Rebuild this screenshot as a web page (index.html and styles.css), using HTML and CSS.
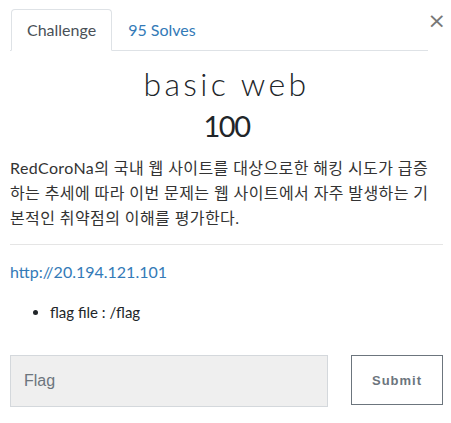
FILE: index.html
```html
<!DOCTYPE html>
<html lang="ko">
<head>
<meta charset="utf-8">
<link rel="stylesheet" href="styles.css">
</head>
<body>
<div class="modal">
  <div class="tabs">
    <ul class="nav">
      <li class="tab active">Challenge</li>
      <li class="tab"><a href="#">95 Solves</a></li>
    </ul>
    <span class="close">&times;</span>
  </div>
  <div class="body">
    <h2 class="title">basic web</h2>
    <h3 class="value">100</h3>
    <p class="desc">RedCoroNa의 국내 웹 사이트를 대상으로한 해킹 시도가 급증하는 추세에 따라 이번 문제는 웹 사이트에서 자주 발생하는 기본적인 취약점의 이해를 평가한다.</p>
    <hr class="rule">
    <p class="link"><a href="#">http://20.194.121.101</a></p>
    <ul class="list"><li>flag file : /flag</li></ul>
    <form class="submit-row">
      <input class="flag" type="text" placeholder="Flag">
      <button class="btn" type="button">Submit</button>
    </form>
  </div>
</div>
</body>
</html>
```

FILE: styles.css
```css
* { box-sizing: border-box; }
html, body { margin: 0; padding: 0; background: #fff; }
body {
  font-family: Lato, "Noto Sans CJK KR", sans-serif;
  color: #212529;
  font-size: 16px;
}
.modal { padding: 9px 8px 0 10px; }
.tabs { display: flex; align-items: flex-start; }
.nav {
  list-style: none; margin: 0; padding: 0 0 0 1px;
  display: flex; width: 420px;
  border-bottom: 1px solid #dee2e6;
}
.tab {
  padding: 10px 15px 10px;
  line-height: 20px;
  font-size: 16px;
  border: 1px solid transparent;
  border-radius: 4px 4px 0 0;
  margin-bottom: -1px;
}
.tab.active {
  color: #495057;
  border-color: #dee2e6 #dee2e6 #fff;
  background: #fff;
}
.tab a { color: #337ab7; text-decoration: none; }
.close {
  margin-left: auto;
  margin-right: -3px;
  font-size: 22px;
  line-height: 1;
  color: #777;
  margin-top: 1px;
  font-family: "DejaVu Sans", sans-serif;
}
.title {
  text-align: center;
  font-weight: 300;
  font-size: 32px;
  letter-spacing: 3.4px;
  margin: 13px 0 0;
  line-height: 40px;
  color: #212529;
}
.value {
  text-align: center;
  font-weight: 400;
  font-size: 29px;
  letter-spacing: -1.5px;
  line-height: 36px;
  margin: 4px 0 11px;
}
.desc {
  margin: 0;
  line-height: 25px;
  color: #333;
  letter-spacing: 0.4px;
}
.rule {
  border: 0;
  border-top: 1px solid #e5e5e5;
  margin: 14px 0 15px;
}
.link { margin: 0; line-height: 24px; }
.link a { color: #337ab7; text-decoration: none; }
.list { margin: 16px 0 0; padding-left: 40px; line-height: 24px; font-size: 15px; }
.submit-row {
  display: flex;
  justify-content: space-between;
  margin-top: 31px;
}
.flag {
  width: 318px; height: 52px;
  background: #efefef;
  border: 1px solid #d4d8dc;
  padding: 0 13px;
  font-family: "Liberation Sans", Arial, sans-serif;
  font-size: 16px;
  color: #495057;
}
.flag::placeholder { color: #6c757d; }
.btn {
  width: 92px; height: 50px;
  background: #fff;
  border: 1px solid #6c757d;
  color: #6c757d;
  font-weight: 700;
  font-size: 13px;
  letter-spacing: 1px;
}
```
